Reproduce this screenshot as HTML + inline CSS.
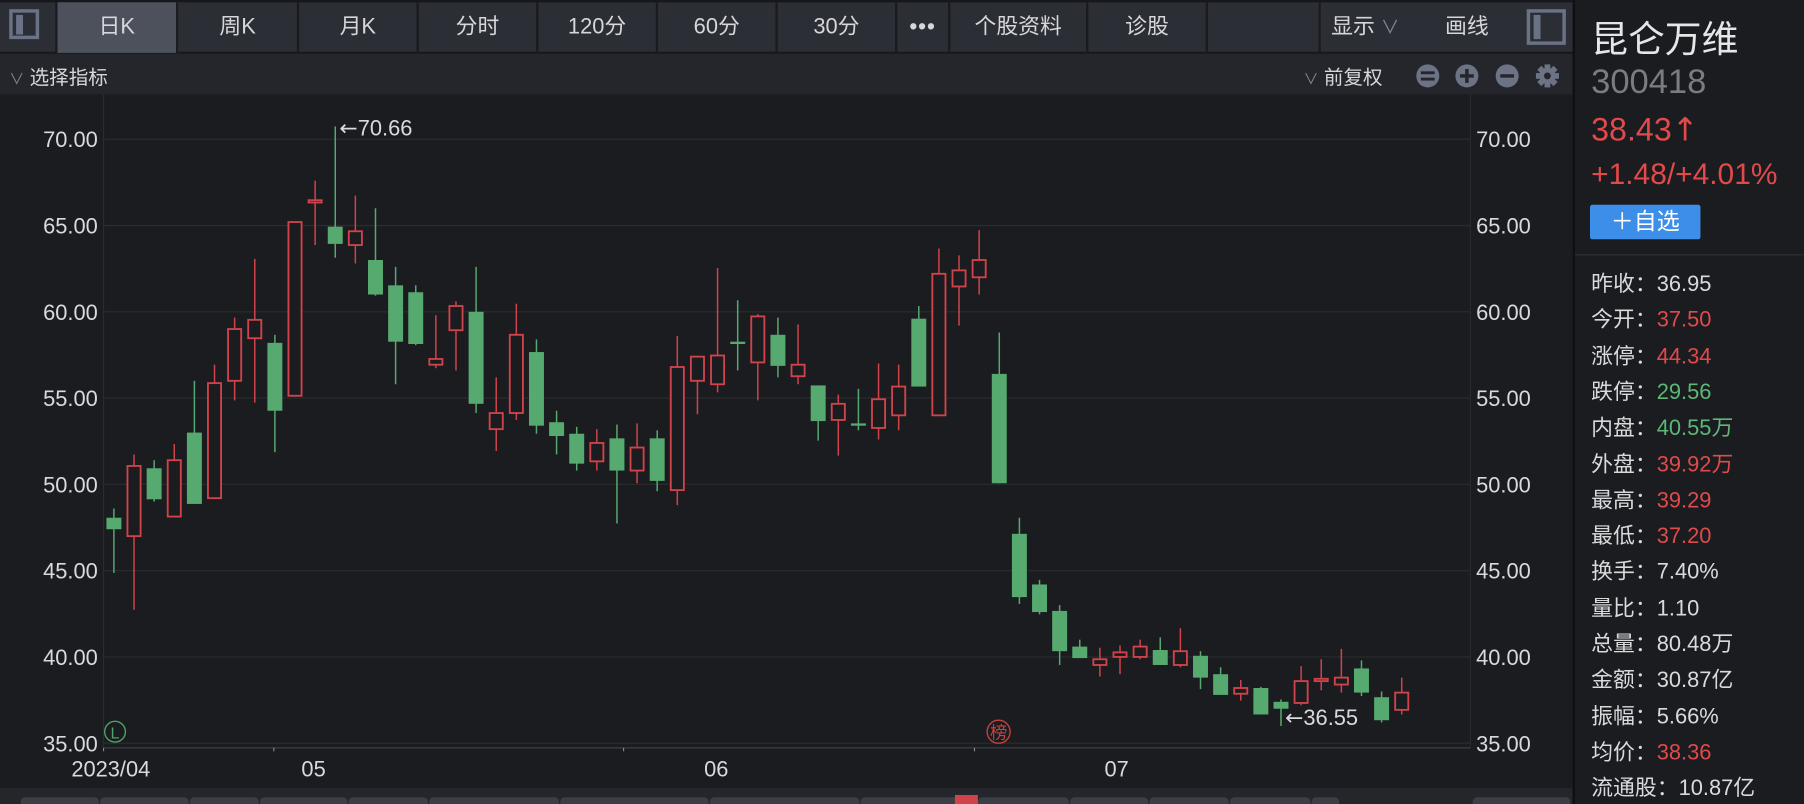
<!DOCTYPE html>
<html><head><meta charset="utf-8"><style>
html,body{margin:0;padding:0;background:#1b1c20;overflow:hidden}
body{width:1804px;height:804px}
#w{position:absolute;left:0;top:0;width:1568px;height:699px;transform:scale(1.1505);transform-origin:0 0;font-family:"Liberation Sans","Noto Sans CJK SC",sans-serif;color:#d9dadc}
.tb{position:absolute;left:0;top:0;width:1367px;height:46px;background:#2b2e35;border-bottom:1px solid #15161a;border-top:2px solid #16171a;box-sizing:border-box}
.tab{position:absolute;top:0;height:44px;line-height:44px;text-align:center;font-size:19px;color:#d6d7da;border-right:2px solid #1a1b1f;box-sizing:border-box}
.row2{position:absolute;left:0;top:47px;width:1367px;height:35px;background:#24262c}
.rp{position:absolute;left:1367px;top:0;width:201px;height:699px;background:#1b1c20;border-left:2px solid #0e0f11}
.kv{position:absolute;left:14px;font-size:19px;color:#d9dadc}
.r{color:#e04a4a}.g{color:#5cb877}
.ar{font-family:"DejaVu Sans",sans-serif}
</style></head><body><div id="w">
<div class="tb">
 <div class="tab" style="left:0;width:50px"><div style="position:absolute;left:8px;top:6px;width:26px;height:26px;border:3px solid #6a7385;box-sizing:border-box"></div><div style="position:absolute;left:14px;top:11px;width:6px;height:17px;background:#6a7385"></div></div>
 <div class="tab" style="left:50px;width:105px;background:#4c515b">日K</div>
 <div class="tab" style="left:155px;width:105px">周K</div>
 <div class="tab" style="left:260px;width:104px">月K</div>
 <div class="tab" style="left:364px;width:104px">分时</div>
 <div class="tab" style="left:468px;width:104px">120分</div>
 <div class="tab" style="left:572px;width:104px">60分</div>
 <div class="tab" style="left:676px;width:104px">30分</div>
 <div class="tab" style="left:780px;width:46px;font-weight:bold;letter-spacing:1px">•••</div>
 <div class="tab" style="left:826px;width:120px">个股资料</div>
 <div class="tab" style="left:946px;width:104px">诊股</div>
 <div class="tab" style="left:1050px;width:98px;border-right:2px solid #1a1b1f"></div>
 <div style="position:absolute;left:1157px;top:0;line-height:44px;font-size:19px;color:#d6d7da">显示 <span style="color:#7c8597;font-size:16px">∨</span></div>
 <div style="position:absolute;left:1256px;top:0;line-height:44px;font-size:19px;color:#d6d7da">画线</div>
 <div style="position:absolute;left:1327px;top:6px;width:34px;height:31px;border:3px solid #6a7385;box-sizing:border-box;background:#2b2e35"></div><div style="position:absolute;left:1333px;top:11px;width:6px;height:21px;background:#6a7385"></div>
</div>
<div class="row2">
 <div style="position:absolute;left:8px;top:6px;font-size:17px;color:#d6d7da"><span style="color:#7c8597;font-size:13px">∨</span> 选择指标</div>
 <div style="position:absolute;left:1133px;top:6px;font-size:17px;color:#d6d7da"><span style="color:#7c8597;font-size:13px">∨</span> 前复权</div>
 <svg style="position:absolute;left:1228px;top:7px" width="130" height="24" viewBox="0 0 130 24">
  <circle cx="13" cy="12" r="10" fill="#6b7385"/><rect x="7" y="8" width="12" height="2.5" fill="#24262c"/><rect x="7" y="13.5" width="12" height="2.5" fill="#24262c"/>
  <circle cx="47" cy="12" r="10" fill="#6b7385"/><rect x="41" y="10.5" width="12" height="3" fill="#24262c"/><rect x="45.5" y="6" width="3" height="12" fill="#24262c"/>
  <circle cx="82" cy="12" r="10" fill="#6b7385"/><rect x="76" y="10.5" width="12" height="3" fill="#24262c"/>
  <g transform="translate(117,12)" fill="#6b7385"><circle r="7"/><rect x="-2.5" y="-10" width="5" height="20"/><rect x="-2.5" y="-10" width="5" height="20" transform="rotate(45)"/><rect x="-2.5" y="-10" width="5" height="20" transform="rotate(90)"/><rect x="-2.5" y="-10" width="5" height="20" transform="rotate(135)"/><circle r="3" fill="#24262c"/></g>
 </svg>
</div>
<svg id="ch" style="position:absolute;left:0;top:82px" width="1367" height="603" viewBox="0 82 1367 603"></svg>
<div style="position:absolute;left:0;top:685px;width:1367px;height:14px;background:#24262b"></div>
<div id="bt"></div>
<div class="rp">
 <div style="position:absolute;left:14px;top:9px;font-size:32px;color:#e6e6e8">昆仑万维</div>
 <div style="position:absolute;left:14px;top:55px;font-size:30px;color:#7a7c82">300418</div>
 <div style="position:absolute;left:14px;top:96px;font-size:28px" class="r">38.43<span class="ar">↑</span></div>
 <div style="position:absolute;left:14px;top:136px;font-size:26px" class="r">+1.48/+4.01%</div>
 <div style="position:absolute;left:13px;top:178px;width:96px;height:30px;background:#3d8ee8;border-radius:2px;font-size:20px;color:#fff;line-height:30px;text-align:center">＋自选</div>
 <div style="position:absolute;left:0;top:221px;width:201px;height:1px;background:#2e3036"></div>
 <div id="kvs"></div>
</div>
</div>
<script>
var ch=document.getElementById('ch'),s='';
var G='#56a96f',R='#d0434a';
for(var p=35;p<=70;p+=5){var y=121+(70-p)*15;s+='<line x1="90" x2="1278" y1="'+y+'" y2="'+y+'" stroke="#2a2c31" stroke-width="1"/>';
s+='<text x="85" y="'+(y+7)+'" text-anchor="end" font-size="19" fill="#d9dadc" font-family="Liberation Sans">'+p.toFixed(2)+'</text>';
s+='<text x="1283" y="'+(y+7)+'" font-size="19" fill="#d9dadc" font-family="Liberation Sans">'+p.toFixed(2)+'</text>';}
s+='<line x1="90" x2="90" y1="82" y2="650" stroke="#2a2c31"/><line x1="1278" x2="1278" y1="82" y2="650" stroke="#2a2c31"/><line x1="90" x2="1278" y1="650" y2="650" stroke="#33353b" stroke-width="1.5"/>';
[[90,'2023/04',62],[238,'05',262],[542,'06',612],[847,'07',960]].forEach(function(a){s+='<line x1="'+a[0]+'" x2="'+a[0]+'" y1="650" y2="653" stroke="#888"/><text x="'+a[2]+'" y="675" font-size="19" fill="#d9dadc" font-family="Liberation Sans">'+a[1]+'</text>';});
var d="G450,460,442,498 R405,466,395,530 G407,434,400,436 R400,449,386,449 G376,438,331,438 R333,433,317,433 R286,331,276,348 R278,294,225,350 G298,357,291,393 R193,344,193,344 R174,176,157,213 G197,212,110,224 R201,213,170,229 G226,256,181,257 G248,297,232,334 G254,299,248,300 R312,317,274,320 R266,287,262,322 G271,351,232,359 R359,373,328,392 R291,359,264,365 G306,370,295,377 G367,379,357,395 G377,403,371,409 R385,401,373,409 G381,409,369,455 R389,409,368,420 G381,418,374,427 R319,426,292,439 R310,331,310,360 R309,334,233,341 G297,299,261,322 R275,315,273,348 G291,318,276,328 R317,327,282,334 G335,366,335,383 R351,365,343,396 G368,369,338,374 R347,372,316,382 R336,361,317,374 G277,336,266,336 R238,361,216,361 R235,249,222,283 R226,241,200,256 G325,420,289,420 G464,519,450,525 G508,532,504,534 G531,566,526,578 G562,572,556,572 R573,578,563,588 R567,571,561,586 R562,571,556,573 G565,578,554,578 R566,578,546,580 G570,589,566,599 G586,604,580,604 R598,603,591,609 G598,621,597,621 G610,616,608,631 R592,611,579,613 R590,592,573,600 R589,595,564,602 G581,602,574,605 G606,626,601,628 R602,617,589,621".split(' ');
d.forEach(function(c,i){var col=c[0]=='G'?G:R,v=c.slice(1).split(',').map(Number),x=99+i*17.49;
var t=v[0],b=v[1];if(b-t<2){b=t+2;}
s+='<line x1="'+x+'" x2="'+x+'" y1="'+v[2]+'" y2="'+v[3]+'" stroke="'+col+'" stroke-width="1.3"/>';
if(c[0]=='G')s+='<rect x="'+(x-6.5)+'" y="'+t+'" width="13" height="'+(b-t)+'" fill="'+col+'"/>';
else s+='<rect x="'+(x-5.7)+'" y="'+t+'" width="11.4" height="'+Math.max(b-t,1.5)+'" fill="#1b1c20" stroke="'+col+'" stroke-width="1.6"/>';});
s+='<text x="295" y="118" font-size="19" fill="#d9dadc" font-family="Liberation Sans"><tspan font-family="DejaVu Sans">←</tspan>70.66</text>';
s+='<text x="1117" y="630" font-size="19" fill="#d9dadc" font-family="Liberation Sans"><tspan font-family="DejaVu Sans">←</tspan>36.55</text>';
s+='<circle cx="100" cy="636" r="9" fill="none" stroke="#4aa56a" stroke-width="1.2"/><text x="100" y="642" text-anchor="middle" font-size="14" fill="#4aa56a" font-family="Liberation Sans">L</text>';
s+='<circle cx="868" cy="636" r="10" fill="none" stroke="#c9403f" stroke-width="1.2"/><text x="868" y="642" text-anchor="middle" font-size="15" fill="#c9403f" font-family="Noto Sans CJK SC">榜</text>';
ch.innerHTML=s;
var bt='',e=[18,87,165,226,303,373,487,617,748,850,930,999,1069,1140,1165];
for(var i=0;i<e.length-1;i++)bt+='<div style="position:absolute;top:693px;left:'+e[i]+'px;width:'+(e[i+1]-e[i]-1)+'px;height:6px;background:#3b3e45;border-radius:4px 4px 0 0"></div>';
bt+='<div style="position:absolute;top:691px;left:830px;width:20px;height:8px;background:#d0434a"></div><div style="position:absolute;top:693px;left:1280px;width:85px;height:6px;background:#3b3e45;border-radius:4px 4px 0 0"></div>';
document.getElementById('bt').innerHTML=bt;
var kv=[['昨收','36.95',''],['今开','37.50','r'],['涨停','44.34','r'],['跌停','29.56','g'],['内盘','40.55万','g'],['外盘','39.92万','r'],['最高','39.29','r'],['最低','37.20','r'],['换手','7.40%',''],['量比','1.10',''],['总量','80.48万',''],['金额','30.87亿',''],['振幅','5.66%',''],['均价','38.36','r'],['流通股','10.87亿','']],h='';
kv.forEach(function(a,i){h+='<div class="kv" style="top:'+(232+i*31.3)+'px">'+a[0]+'：<span class="'+a[2]+'">'+a[1]+'</span></div>';});
document.getElementById('kvs').innerHTML=h;
</script>
</body></html>
